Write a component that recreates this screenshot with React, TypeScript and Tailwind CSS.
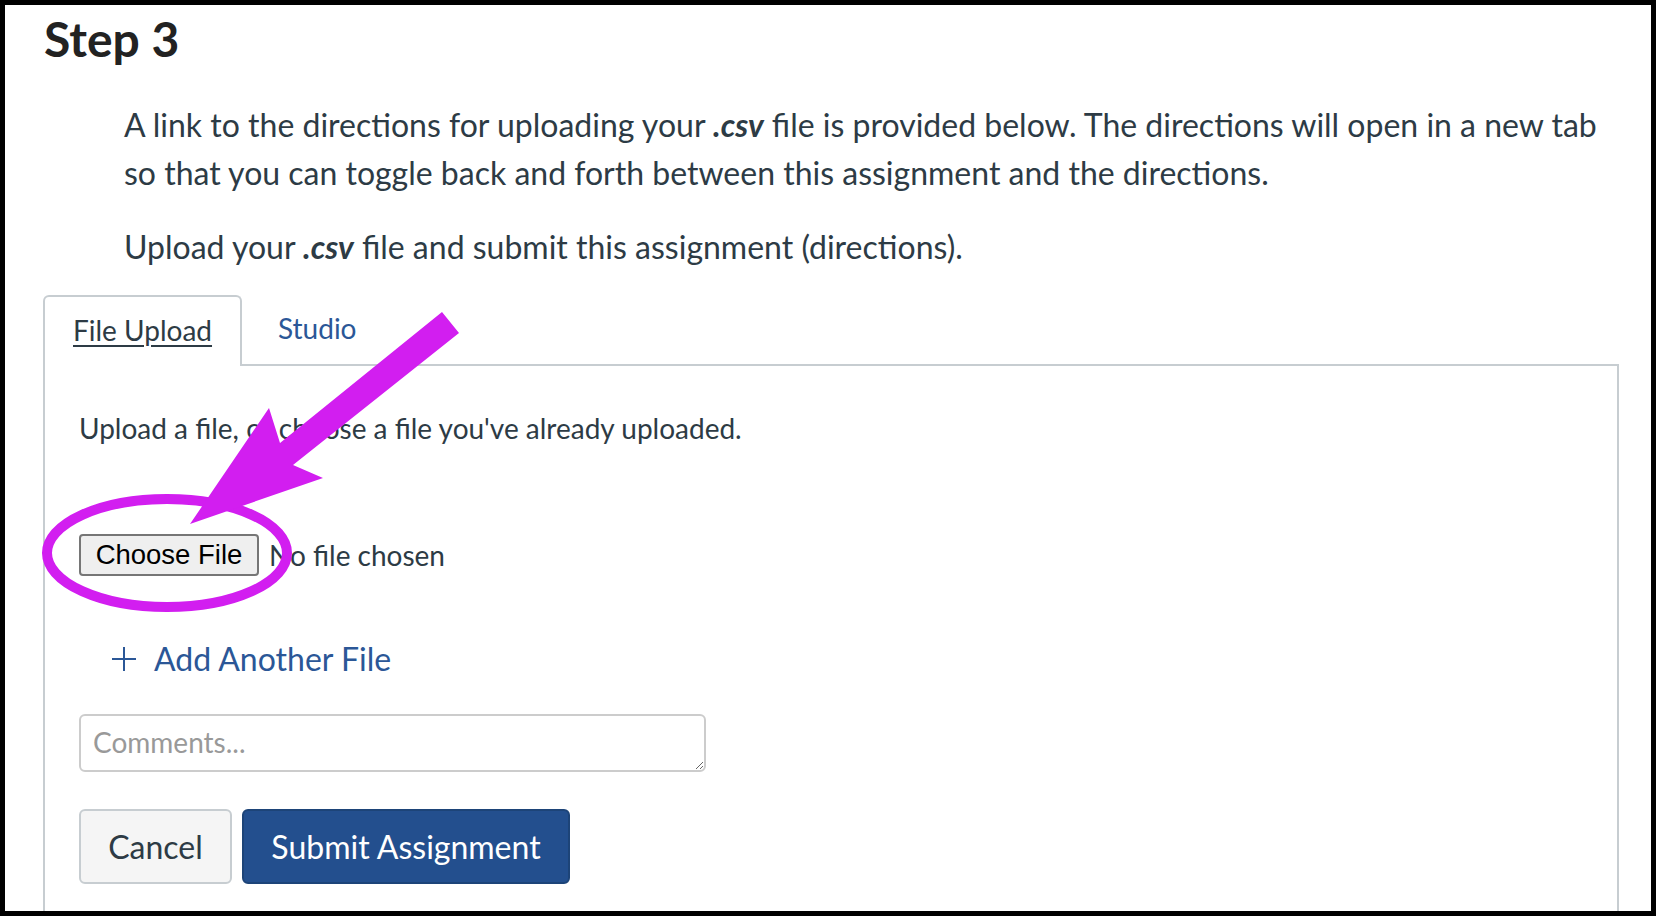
export default function App() {
  return (
    <div className="relative h-[916px] w-full overflow-hidden bg-black p-[5px]">
      <div className="h-full overflow-hidden bg-white pl-[38px] pr-[32px] pt-[5px] font-['Lato',sans-serif] text-[#2d3b45]">
        <h2 className="ml-[1px] text-[48px] font-bold leading-[58px] text-[#222]">Step 3</h2>

        <div className="ml-[81px] mt-[33px] text-[32px] leading-[48px]">
          <p>
            A link to the directions for uploading your <b className="italic">.csv</b> file is provided below. The
            directions will open in a new tab
            <br />
            so that you can toggle back and forth between this assignment and the directions.
          </p>
          <p className="mt-[26px]">
            Upload your <b className="italic">.csv</b> file and submit this assignment (directions).
          </p>
        </div>

        <div className="mt-[24px]">
          <div className="flex items-end">
            <div className="relative z-10 -mb-[2px] rounded-t-[6px] border-2 border-b-0 border-[#c7cdd1] bg-white px-[28px] pb-[15px] pt-[12px] text-[28px] leading-[42px]">
              <span className="underline decoration-2 underline-offset-[4px]">File Upload</span>
            </div>
            <div className="pb-[15px] pl-[36px] pt-[12px] text-[28px] leading-[42px] text-[#2b5797]">Studio</div>
          </div>

          <div className="h-[600px] border-2 border-b-0 border-[#c7cdd1] px-[34px] pt-[41px]">
            <p className="text-[28px] leading-[42px]">Upload a file, or choose a file you've already uploaded.</p>

            <div className="mt-[85px] flex items-center gap-[10px]">
              <button className="h-[42px] w-[180px] rounded-[4px] border-2 border-[#767676] bg-[#efefef] font-['Liberation_Sans',Arial,sans-serif] text-[27.5px] leading-none text-black">
                Choose File
              </button>
              <span className="text-[28px] leading-[42px]">No file chosen</span>
            </div>

            <div className="ml-[32px] mt-[59px] flex items-center gap-[17px] text-[32px] leading-[48px] text-[#2b5797]">
              <svg width="26" height="26" viewBox="0 0 26 26" fill="none" stroke="currentColor" strokeWidth="2">
                <path d="M13 1v24M1 13h24" />
              </svg>
              <span>Add Another File</span>
            </div>

            <textarea
              placeholder="Comments..."
              className="mt-[31px] block h-[58px] w-[627px] rounded-[6px] border-2 border-[#cccccc] px-[12px] py-[6px] text-[28px] leading-[40px] outline-none placeholder:text-[#999999]"
            />

            <div className="mt-[37px] flex gap-[10px] text-[32px]">
              <button className="h-[75px] w-[153px] rounded-[6px] border-2 border-[#c7cdd1] bg-[#f5f5f5] text-[#2d3b45]">
                Cancel
              </button>
              <button className="h-[75px] w-[328px] rounded-[6px] border-2 border-[#1d4478] bg-[#234f8e] text-white">
                Submit Assignment
              </button>
            </div>
          </div>
        </div>
      </div>

      <svg className="pointer-events-none absolute left-0 top-0" width="1656" height="916" viewBox="0 0 1656 916">
        <ellipse cx="167" cy="553" rx="120" ry="54" fill="none" stroke="#d21ef0" strokeWidth="10" />
        <polygon
          points="442,312 459,333 293,465 323,478 190,524 269,408 280,443"
          fill="#d21ef0"
        />
      </svg>
    </div>
  );
}
